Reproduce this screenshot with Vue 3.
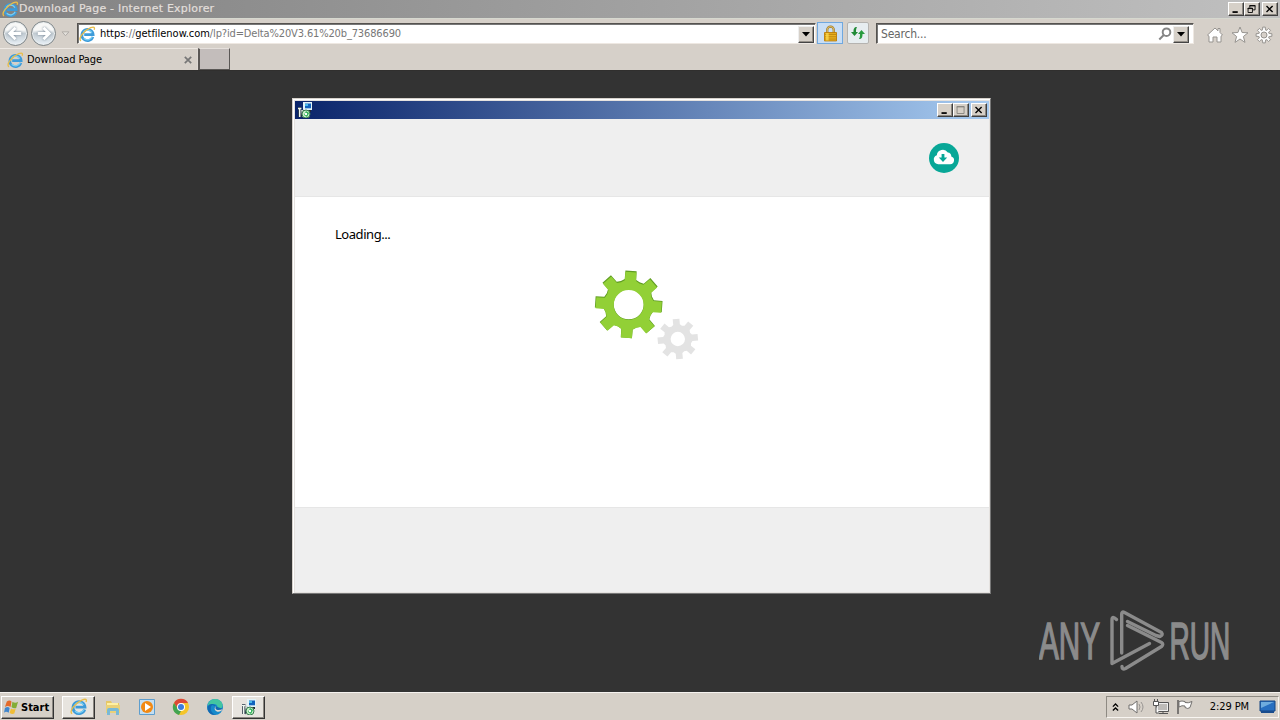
<template>
  <div class="screen">
    <!-- shared icons -->
    <svg class="defs" aria-hidden="true">
      <symbol id="ie" viewBox="0 0 18 18">
        <path d="M14.7 11.5A6 6 0 1 1 15 9.2H5.5" fill="none" stroke="#3d9bd9" stroke-width="2.8" />
        <path d="M14 11.5A5.5 5.5 0 0 1 5 13M4.7 6.8A5.4 5.4 0 0 1 13.7 7" fill="none" stroke="#7bd0f5" stroke-width="1.3" />
        <path d="M2 15.8C-1.2 13.2 5.2 4.8 12.4 1.8c3.3-1.3 4.7-.4 3.6 2.3" fill="none" stroke="#e8bd4a" stroke-width="1.4" />
      </symbol>
      <symbol id="setup" viewBox="0 0 16 16">
        <path d="M6 0h9v8H6z" fill="#e2f3f8" />
        <path d="M8 1.5h6v4.8H8z" fill="#1263bd" />
        <path d="M8 2h3v2H8z" fill="#49bae9" />
        <path d="M8 8h6v2H8z" fill="#252b35" />
        <path d="M1 6.5h3.4M2.7 6v9M5 8l1 7" stroke="#263544" stroke-width="3" />
        <path d="M1 6.5h3.4M2.7 6v9M5 8l1 7" stroke="#eff7ef" stroke-width="1.5" />
        <circle cx="9" cy="12" r="4" fill="#c7f1c8" stroke="#397d50" />
        <path d="M7 13l2-4 3 2-2 4z" fill="#2cae57" />
        <circle cx="9" cy="12" r="1.2" fill="#fff" />
      </symbol>
    </svg>

    <header class="ie-title">
      <svg class="i17"><use href="#ie" /></svg>
      <span class="caption">Download Page - Internet Explorer</span>
      <div class="controls">
        <span class="win-btn"><svg viewBox="0 0 16 13"><path d="M4 9h6v2H4z" /></svg></span>
        <span class="win-btn"><svg viewBox="0 0 16 13"><path d="M5.5 5V2.5h6v5H9M5 3h7M3.5 5.5h5v5h-5zM3 6h6" fill="none" stroke="#000" /></svg></span>
        <span class="win-btn close"><svg viewBox="0 0 16 13"><path d="M4 3l7 7M11 3l-7 7" stroke="#000" stroke-width="1.6" /></svg></span>
      </div>
    </header>

    <nav class="toolbar">
      <div class="travel">
        <span class="round"><svg viewBox="0 0 24 24"><path d="M18 12H7M12 6l-6 6 6 6" /></svg></span>
        <span class="round"><svg viewBox="0 0 24 24"><path d="M6 12h11M12 6l6 6-6 6" /></svg></span>
        <svg class="history" viewBox="0 0 10 7"><path d="M1 1h8L5 5.5z" fill="#e4e1dc" stroke="#aaa5a1" /></svg>
      </div>
      <div class="field address">
        <svg class="i17"><use href="#ie" /></svg>
        <span class="url">https<i>://</i>getfilenow.com<i class="path">/lp?id=Delta%20V3.61%20b_73686690</i></span>
        <span class="drop"><svg viewBox="0 0 8 5"><path d="M0 0h8L4 4.5z" /></svg></span>
      </div>
      <span class="tool lock">
        <svg viewBox="0 0 14 17"><path d="M3.5 8V4.5a3.5 3.5 0 0 1 7 0V8" fill="none" stroke="#9b7427" stroke-width="2.4" /><path d="M3.5 8V4.5a3.5 3.5 0 0 1 7 0V8" fill="none" stroke="#e9cc72" /><path d="M.5 7.5h13v9H.5z" fill="#e9b221" stroke="#bb7b05" /><path d="M1 9.5h12M1 12h12M1 14.5h12" stroke="#bd8510" /><path d="M2 8h3v8H2z" fill="#ffdf53" opacity=".7" /></svg>
      </span>
      <span class="tool refresh">
        <svg viewBox="0 0 16 14"><path d="M7 1C4 1 3.5 3 3.5 6H1l3.5 4L8 6H6C6 4 6 3 7 1z" fill="#218a37" /><path d="M9 13c3 0 3.5-2 3.5-5H15l-3.5-4L8 8h2c0 2 0 3-1 5z" fill="#289b3f" /></svg>
      </span>
      <div class="field search">
        <span>Search...</span>
        <svg class="lens" viewBox="0 0 14 14"><circle cx="8.5" cy="5.2" r="3.8" /><path d="M5.8 8L1.3 12.5" /></svg>
        <span class="drop"><svg viewBox="0 0 8 5"><path d="M0 0h8L4 4.5z" /></svg></span>
      </div>
      <div class="commands">
        <svg viewBox="0 0 18 18"><path d="M1.5 9L9 2l3 2.8V2.5h2v4L16.5 9 15 10.2V16h-4v-5H7v5H3v-5.8z" /></svg>
        <svg viewBox="0 0 18 18"><path d="M9 1l2.1 5.5 5.9.3-4.6 3.7 1.6 5.9L9 13l-5 3.4 1.6-5.9L1 6.8l5.9-.3z" /></svg>
        <svg viewBox="0 0 18 18"><path :d="gear(9, 9, 8, 6, 0)" /><circle cx="9" cy="9" r="3" /></svg>
      </div>
    </nav>

    <div class="tabs">
      <div class="tab">
        <svg class="i17"><use href="#ie" /></svg>
        <span>Download Page</span>
        <svg class="tab-close" viewBox="0 0 8 8"><path d="M.8.8l6.4 6.4M7.2.8L.8 7.2" /></svg>
      </div>
      <div class="new-tab"></div>
    </div>

    <main class="page">
      <section class="dialog">
        <div class="dialog-title">
          <svg class="i16"><use href="#setup" /></svg>
          <div class="controls">
            <span class="win-btn"><svg viewBox="0 0 16 13"><path d="M4 9h6v2H4z" /></svg></span>
            <span class="win-btn"><svg viewBox="0 0 16 13"><path d="M3.5 2.5h8v8h-8zM3 3h9" fill="none" stroke="#85827d" /></svg></span>
            <span class="win-btn close"><svg viewBox="0 0 16 13"><path d="M4 3l7 7M11 3l-7 7" stroke="#000" stroke-width="1.6" /></svg></span>
          </div>
        </div>
        <div class="dialog-head">
          <svg viewBox="0 0 30 30">
            <circle cx="15" cy="15" r="15" fill="#08a797" />
            <path d="M9.2 21.2a4.6 4.6 0 0 1-1.4-8.9A6 6 0 0 1 18.8 9.6a3.5 3.5 0 0 1 3.5 3.8A4 4 0 0 1 21.2 21.2z" fill="#fff" />
            <path d="M12.6 11h2.8v3.5h2.8L14 19l-4.2-4.5h2.8z" fill="#08a797" />
          </svg>
        </div>
        <div class="dialog-body">
          <p>Loading...</p>
          <svg class="gears" viewBox="0 0 110 96">
            <path :d="gear(35.7, 38.3, 34, 25.5, 4) + hole(35.7, 38.3, 15)" fill="#5f9d22" fill-rule="evenodd" />
            <path :d="gear(35.7, 39, 33.3, 25, 4) + hole(35.7, 39, 15)" fill="#92d036" fill-rule="evenodd" />
            <path :d="gear(84.8, 73, 20.4, 14.8, -5) + hole(84.8, 73, 7.2)" fill="#e3e3e3" fill-rule="evenodd" />
          </svg>
        </div>
        <div class="dialog-foot"></div>
      </section>

      <div class="watermark">
        <svg viewBox="0 0 196 64">
          <text transform="translate(0 50.5) scale(.57 1)">ANY</text>
          <g fill="none" stroke="#8b8b8b" stroke-width="3.4" stroke-linejoin="round" stroke-linecap="round">
            <path d="M77.5 11.5Q73 7 73 12V55.5L110.5 35.5" />
            <path d="M82.7 45V6Q82.7 3 85.5 4.5L122.5 24.5Q124.5 27 121 28.5L117 27.5L88.5 13.5" />
            <path d="M88.5 17.5L122.5 34.5Q125 36 122.5 38.5L86.5 60.5Q83 62 83 58.5" />
          </g>
          <text transform="translate(130.5 50.5) scale(.54 1)">RUN</text>
        </svg>
      </div>
    </main>

    <footer class="taskbar">
      <button class="start">
        <svg viewBox="0 0 16 16"><path d="M3 2q3-2 5 0L7 8Q4 6 1 8z" fill="#e46a29" /><path d="M9 2.5q3 2 6 0L13 9q-3 1-5-1z" fill="#83ad37" /><path d="M1 9q3-2 5 0l-1 5q-3-2-5 0z" fill="#4086cd" /><path d="M7.5 9.5q3 2 5 0L11 15q-3 1-5-1z" fill="#f0bd36" /></svg>
        <span>Start</span>
      </button>
      <div class="task pressed first"><svg class="i18"><use href="#ie" /></svg></div>
      <div class="task">
        <svg class="i18" viewBox="0 0 18 18"><path d="M2 3h5l1 2h7v5H2z" fill="#e6c766" /><path d="M3 5h11v8H3z" fill="#fff0a2" /><path d="M2 7h14v8H2z" fill="#ead178" /><path d="M3 17v-5q0-2 2-2h8q2 0 2 2v5h-3v-4H6v4z" fill="#79b9d6" /></svg>
      </div>
      <div class="task">
        <svg class="i18" viewBox="0 0 18 18"><path d="M1.5 1.5h15v15h-15z" fill="#c4def1" stroke="#5e9ece" /><circle cx="9" cy="9" r="6" fill="#f28913" /><path d="M7 5l6 4-6 4z" fill="#fff" /></svg>
      </div>
      <div class="task">
        <svg class="i18" viewBox="0 0 18 18"><circle cx="9" cy="9" r="8" fill="#f5c529" /><path d="M2 5a8 8 0 0 1 14 0H9L6 11z" fill="#dc4937" /><path d="M2 5l4 6 3 2-2 4A8 8 0 0 1 2 5z" fill="#42a451" /><circle cx="9" cy="9" r="4" fill="#fff" /><circle cx="9" cy="9" r="3" fill="#3c7ddd" /></svg>
      </div>
      <div class="task">
        <svg class="i18" viewBox="0 0 18 18"><circle cx="9" cy="9" r="8" fill="#168acb" /><path d="M2 6C4 0 13-1 16 5c2 5-2 7-6 6 3-2 1-5-2-5-3 0-5 1-6 3z" fill="#43c5a1" /><path d="M6 7c-3 4 0 9 4 10-6 1-10-5-8-9 1-2 5-3 8 0-2 0-2 5 3 5 2 0 3-1 4-2" fill="#1269b2" /><path d="M10 8c-2 4 2 5 7 3-2 3-6 4-8 1-1-2 0-3 1-4z" fill="#ddd8d1" /></svg>
      </div>
      <div class="task pressed last"><svg class="i16"><use href="#setup" /></svg></div>

      <div class="tray">
        <svg class="chevron" viewBox="0 0 8 10"><path d="M1 4l3-3 3 3M1 8.5l3-3 3 3" /></svg>
        <svg viewBox="0 0 18 16"><path d="M1 6h3l5-4v12l-5-4H1z" fill="#fff" stroke="#716f6d" /><path d="M11 5q2 3 0 6M13 3q4 5 0 10" fill="none" stroke="#989592" /></svg>
        <svg viewBox="0 0 18 16"><path d="M4.5 3.5h12v9h-12zM7 14.5h9M11 12v3" fill="#eee" stroke="#555" /><path d="M6 5h9v6H6z" fill="#bdbbb8" /><path d="M1.5 2.5h5v4h-5zM2.5 0v2M5.5 0v2M4 7v7h3" fill="#fff" stroke="#555" /></svg>
        <svg viewBox="0 0 18 16"><path d="M2 1v14" stroke="#5b5a59" stroke-width="1.5" /><path d="M3 2.5q3-1 6 0v1q3 1 7-1l-2 6q-2 2-5 0V7Q6 6 3 8z" fill="#fff" stroke="#72706e" /></svg>
        <time>2:29 PM</time>
        <svg class="desktop" viewBox="0 0 17 14"><path d="M1 1h15v10H1z" fill="#286fc0" stroke="#174682" /><path d="M2 2h13L2 8z" fill="#6facde" /><path d="M2 11h13v2H2z" fill="#194c8d" /></svg>
      </div>
    </footer>
  </div>
</template>

<script setup>
// eight-toothed gear outline, turn in degrees
const gear = (cx, cy, outer, inner, turn) => {
  const shape = [[-13, inner], [-9.5, outer], [9.5, outer], [13, inner], [22.5, inner - 1]]
  const points = []
  for (let i = 0; i < 8; i++) {
    for (const [offset, r] of shape) {
      const a = (i * 45 + offset + turn - 90) * Math.PI / 180
      points.push(`${(cx + r * Math.cos(a)).toFixed(2)} ${(cy + r * Math.sin(a)).toFixed(2)}`)
    }
  }
  return `M${points.join('L')}Z`
}

const hole = (cx, cy, r) => `M${cx - r} ${cy}a${r} ${r} 0 1 0 ${r * 2} 0a${r} ${r} 0 1 0 ${-r * 2} 0Z`
</script>

<style>
body { overflow: hidden; }
</style>

<style scoped>
.screen { width: 1280px; height: 720px; display: flex; flex-direction: column; background: #333; color: #000; font: 11px/14px "DejaVu Sans Condensed", "DejaVu Sans", sans-serif; }
.screen * { box-sizing: border-box; }
.defs { position: absolute; width: 0; height: 0; }
svg { flex: none; display: block; }
.i16 { width: 16px; height: 16px; }
.i17 { width: 17px; height: 17px; }
.i18 { width: 18px; height: 18px; }

.ie-title { height: 18px; flex: none; display: flex; align-items: center; padding: 0 2px; background: linear-gradient(90deg, #828282, #c0c0c0); }
.caption { color: #e2dfdb; font-family: "DejaVu Sans", sans-serif; white-space: nowrap; letter-spacing: .2px; -webkit-text-stroke: .2px #e2dfdb; }
.controls { display: flex; margin-left: auto; }
.win-btn { width: 16px; height: 14px; background: #d6d0c8; border: 1px solid; border-color: #fff #404040 #404040 #fff; box-shadow: inset -1px -1px #8b8781; }
.win-btn svg { width: 14px; height: 12px; }
.win-btn.close { margin-left: 2px; }

.toolbar { height: 30px; flex: none; display: flex; align-items: flex-start; padding: 4px 0 0 3px; background: #d6d0c9; border-top: 1px solid #d6d8cf; }
.travel { width: 74px; height: 25px; display: flex; align-items: center; margin-top: -2px; }
.round { width: 25px; height: 25px; margin-right: 3px; border: 1px solid #7e8588; border-radius: 50%; background: linear-gradient(#f8f8f7 0 35%, #c2cbd2 50%, #e9f1f7); box-shadow: inset 0 0 0 1px #e9edef; }
.round svg { width: 23px; height: 23px; fill: none; }
.round path { stroke: #fff; stroke-width: 3; filter: drop-shadow(0 0 1px #718394); }
.history { width: 9px; height: 6px; margin-left: 2px; }
.field { height: 21px; display: flex; align-items: center; background: #fff; border: 1px solid; border-color: #55524f #eee8e2 #eee8e2 #55524f; box-shadow: inset 1px 1px #777; }
.address { width: 739px; padding: 1px 1px 0; }
.url { margin-left: 4px; font-size: 11px; letter-spacing: -.03px; }
.url i { font-style: normal; color: #777; }
.url .path { letter-spacing: -.14px; }
.drop { width: 16px; height: 17px; margin-left: auto; display: flex; align-items: center; justify-content: center; background: #d6d0c8; border: 1px solid; border-color: #eee #444 #444 #eee; box-shadow: inset -1px -1px #96918a; }
.drop svg { width: 8px; height: 5px; }
.tool { display: flex; align-items: center; justify-content: center; height: 22px; margin-top: -1px; }
.lock { width: 26px; margin-left: 1px; background: #c9def5; border: 1px solid #70a8df; }
.lock svg { width: 13px; height: 17px; }
.refresh { width: 22px; margin-left: 4px; background: #e7edf0; border: 1px solid #b5b3b0; border-radius: 2px; }
.refresh svg { width: 16px; height: 14px; }
.search { width: 318px; margin-left: 7px; padding: 1px 4px 0; color: #666; }
.search > span:first-child { font-size: 12px; letter-spacing: -.2px; }
.lens { width: 14px; height: 14px; margin-left: auto; fill: none; stroke: #858585; stroke-width: 2; }
.search .drop { margin-left: 1px; }
.commands { display: flex; gap: 6.5px; margin: 3px 0 0 12px; }
.commands svg { width: 18px; height: 18px; fill: #fff; stroke: #96938f; stroke-width: 1; }
.commands svg:last-child circle { fill: #d6d0c9; }

.tabs { height: 23px; flex: none; display: flex; background: #d6d0c9; border-bottom: 1px solid #302f2e; }
.tab { width: 198px; display: flex; align-items: center; padding: 1px 5px 0 7px; border-top: 1px solid #eee9e4; border-right: 1px solid #ddd8d3; }
.tab span { margin-left: 3px; letter-spacing: -.1px; }
.tab-close { width: 8px; height: 8px; margin-left: auto; fill: none; stroke: #777; stroke-width: 1.7; }
.new-tab { width: 32px; background: #c3bdbb; border: 2px solid #5a5755; border-top-color: #e5e0dc; border-top-width: 1px; border-right-width: 1px; border-bottom-width: 1px; }

.page { height: 621px; flex: none; padding: 27px 0 0 292px; background: #333; position: relative; }
.dialog { width: 699px; height: 496px; padding: 2px 1px 1px 2px; border: 1px solid; border-color: #d6d1cb #777 #777 #d6d1cb; background: #e5e2df; display: flex; flex-direction: column; box-shadow: inset 1px 1px #fff; }
.dialog-title { height: 18px; flex: none; display: flex; align-items: center; padding: 0 2px; background: linear-gradient(90deg, #0a246a, #a6caf0); }
.dialog-head { height: 78px; flex: none; padding: 24px 30px 0; background: #efefef; border-bottom: 1px solid #e6e6e6; }
.dialog-head svg { width: 30px; height: 30px; margin-left: auto; }
.dialog-body { height: 310px; flex: none; padding: 28px 40px 0; background: #fff; }
.dialog-body p { height: 18px; margin: 0; font: 13px/18px "Noto Sans", sans-serif; letter-spacing: -.45px; }
.gears { width: 110px; height: 96px; margin: 23px 0 0 258px; }
.dialog-foot { flex: 1; background: #efefef; border-top: 1px solid #e6e6e6; }

.watermark { position: absolute; left: 1039px; top: 537px; width: 196px; height: 64px; }
.watermark svg { width: 196px; height: 64px; }
.watermark text { font: 52px "Liberation Sans", sans-serif; fill: #8b8b8b; stroke: #8b8b8b; stroke-width: 1.6px; }

.taskbar { height: 28px; flex: none; display: flex; align-items: center; padding: 1px 1px 0; background: #d6d0c8; border-top: 1px solid #f5f2ef; }
.start { width: 53px; height: 23px; display: flex; align-items: center; gap: 2px; padding: 0 2px; background: #d6d0c8; color: #000; border: 1px solid; border-color: #fff #333 #333 #fff; box-shadow: inset -1px -1px #8b8781; font: bold 11px "DejaVu Sans Condensed", sans-serif; letter-spacing: 0; }
.start svg { width: 15px; height: 16px; }
.task { width: 34px; height: 23px; display: flex; align-items: center; justify-content: center; }
.task.first { margin-left: 8px; margin-right: 1px; }
.pressed { width: 33px; background: #e7e4df; border: 1px solid; border-color: #fff #333 #333 #fff; box-shadow: inset -1px -1px #8b8781; }
.tray { width: 173px; height: 22px; margin-left: auto; display: flex; align-items: center; gap: 6px; padding: 0 2px 0 5px; border: 1px solid; border-color: #8e8a83 #f8f5f1 #f8f5f1 #8e8a83; }
.tray svg { width: 18px; height: 16px; }
.tray .chevron { width: 7px; height: 9px; margin-right: 3px; fill: none; stroke: #000; stroke-width: 1.5; }
.tray time { margin-left: auto; white-space: nowrap; letter-spacing: -.1px; }
.tray .desktop { width: 17px; height: 14px; margin-left: 4px; }
</style>
